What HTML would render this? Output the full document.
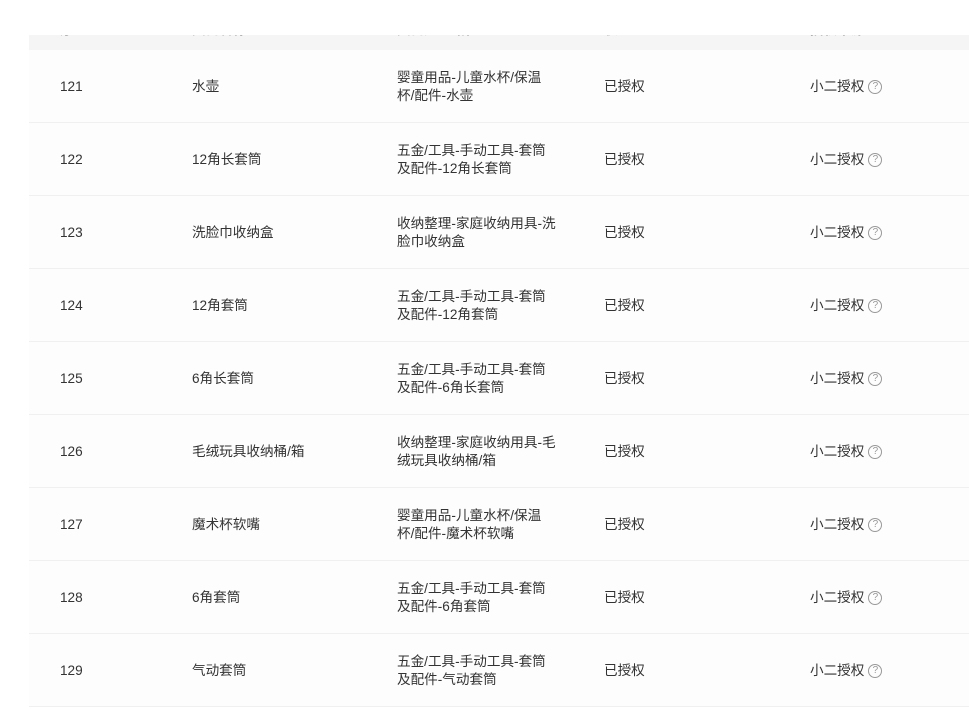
<!DOCTYPE html>
<html><head><meta charset="utf-8"><style>
body{margin:0;background:#fff;width:969px;height:709px;overflow:hidden;font-family:"Liberation Sans","Noto Sans CJK SC",sans-serif;font-size:13.6px;color:#333;position:relative}
.hd{position:absolute;left:29px;top:35px;width:940px;height:15px;background:#f5f5f6;overflow:hidden}
.hd span{position:absolute;top:-17px;color:#666;font-weight:bold}
.row{position:absolute;left:29px;width:940px;height:72px;background:#fdfdfd;border-bottom:1px solid #f0f0f0}
.c{position:absolute;top:1px;height:72px;display:flex;align-items:center;line-height:18px}
.q{display:inline-block;width:12px;height:12px;border:1px solid #999;border-radius:50%;font-size:10px;line-height:12px;text-align:center;color:#999;margin-left:4px;box-sizing:content-box}
</style></head><body>
<div class="hd"><span style="left:31px">序号</span><span style="left:163px">类目名称</span><span style="left:368px">类目完整路径</span><span style="left:575px">状态</span><span style="left:781px">授权来源</span></div>
<div id="t"></div>
<script>
var d=[["121","水壶","婴童用品-儿童水杯/保温<br>杯/配件-水壶"],["122","12角长套筒","五金/工具-手动工具-套筒<br>及配件-12角长套筒"],["123","洗脸巾收纳盒","收纳整理-家庭收纳用具-洗<br>脸巾收纳盒"],["124","12角套筒","五金/工具-手动工具-套筒<br>及配件-12角套筒"],["125","6角长套筒","五金/工具-手动工具-套筒<br>及配件-6角长套筒"],["126","毛绒玩具收纳桶/箱","收纳整理-家庭收纳用具-毛<br>绒玩具收纳桶/箱"],["127","魔术杯软嘴","婴童用品-儿童水杯/保温<br>杯/配件-魔术杯软嘴"],["128","6角套筒","五金/工具-手动工具-套筒<br>及配件-6角套筒"],["129","气动套筒","五金/工具-手动工具-套筒<br>及配件-气动套筒"]];
var h="";d.forEach(function(r,i){h+='<div class="row" style="top:'+(50+i*73)+'px"><div class="c" style="left:31px">'+r[0]+'</div><div class="c" style="left:163px">'+r[1]+'</div><div class="c" style="left:368px">'+r[2]+'</div><div class="c" style="left:575px">已授权</div><div class="c" style="left:781px">小二授权<span class="q">?</span></div></div>'});
document.getElementById("t").innerHTML=h;
</script>
</body></html>
